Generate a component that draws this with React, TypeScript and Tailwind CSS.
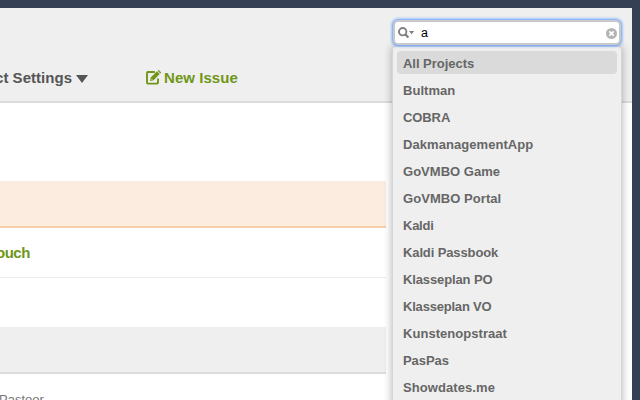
import React from "react";

const projects = [
  { name: "All Projects", tracking: "tracking-[-0.03px]" },
  { name: "Bultman", tracking: "tracking-[0.05px]" },
  { name: "COBRA", tracking: "tracking-[-0.1px]" },
  { name: "DakmanagementApp", tracking: "tracking-[0.06px]" },
  { name: "GoVMBO Game", tracking: "tracking-[0.02px]" },
  { name: "GoVMBO Portal", tracking: "tracking-[0.06px]" },
  { name: "Kaldi", tracking: "tracking-[-0.25px]" },
  { name: "Kaldi Passbook", tracking: "tracking-[-0.12px]" },
  { name: "Klasseplan PO", tracking: "tracking-[-0.12px]" },
  { name: "Klasseplan VO", tracking: "tracking-[-0.2px]" },
  { name: "Kunstenopstraat", tracking: "tracking-[0.04px]" },
  { name: "PasPas", tracking: "tracking-[-0.05px]" },
  { name: "Showdates.me", tracking: "tracking-[0.08px]" },
];

function EditIcon() {
  return (
    <svg width="15" height="15" viewBox="0 0 15 15" fill="none" className="-mt-px shrink-0">
      <path d="M8.8 2H2C1.400 2 1 2.400 1 3V12.600C1 13.200 1.400 13.600 2 13.600H11C11.600 13.600 12 13.200 12 12.600V8.600" stroke="#6f9618" strokeWidth="1.900" />
      <path d="M4 11.100L4.800 7.400L10.900 1.300L13.700 4.100L7.600 10.200Z" fill="#6f9618" />
      <path d="M11.700 .7L12.400 0H12.700L15 2.300V2.700L14.300 3.400Z" fill="#6f9618" />
      <path d="M5.200 8.700L6.400 9.900" stroke="#efefef" strokeWidth=".8" />
    </svg>
  );
}

function SearchField() {
  return (
    <div className="flex h-[25px] items-center rounded-[5px] border-2 border-[#c9c9c9] bg-white pr-[2px] pl-[3px] shadow-[0_0_3px_1px_#5c9bff]">
      <svg width="17" height="12" viewBox="0 0 17 12" fill="none" className="mt-px shrink-0">
        <circle cx="4.700" cy="4.700" r="3.700" stroke="#808080" strokeWidth="1.900" />
        <path d="M7.300 7.400L10.400 10.500" stroke="#808080" strokeWidth="2.200" />
        <path d="M11 4H16.200L13.600 7.200Z" fill="#808080" />
      </svg>
      <span className="ml-[6px] text-[12.5px] leading-4 text-black">a</span>
      <svg width="11" height="11" viewBox="0 0 11 11" className="mt-px ml-auto shrink-0">
        <circle cx="5.500" cy="5.500" r="5.500" fill="#b4b4b4" />
        <path d="M3.300 3.300L7.700 7.700M7.700 3.300L3.300 7.700" stroke="#fff" strokeWidth="1.700" />
      </svg>
    </div>
  );
}

export default function App() {
  return (
    <div className="relative h-[400px] w-[640px] overflow-hidden bg-[#364055] pt-2 pr-2 font-['Liberation_Sans',Arial,sans-serif]">
      <div className="h-[392px] bg-white">
        <header className="flex h-[95px] border-b-2 border-[#dcdcdc] bg-[#efefef] pt-[60px] text-[15px] leading-5 font-bold">
          <div className="flex h-5 w-[146px] items-center text-[#555]">
            <span className="-ml-[5px] w-[78px] whitespace-nowrap tracking-[0.04px]">ct Settings</span>
            <svg width="12" height="8" viewBox="0 0 12 8" className="mt-[2px] ml-[3px]">
              <path d="M0 0H12L6 8Z" fill="#555" />
            </svg>
          </div>
          <div className="flex h-5 items-center text-[#6f9618]">
            <EditIcon />
            <span className="ml-[3px] tracking-[0.05px]">New Issue</span>
          </div>
        </header>
        <main className="w-[386px] pt-[78px]">
          <div className="h-[47px] border-b-2 border-[#f7ceaa] bg-[#fcebdf]" />
          <div className="h-[50px] overflow-hidden border-b border-[#ececec] pt-[15px] text-[15px] leading-5 font-bold text-[#6f9618]">
            <span className="-ml-[4px] tracking-[-0.5px]">ouch</span>
          </div>
          <div className="mt-[49px] h-[47px] border-b-2 border-[#dcdcdc] bg-[#efefef]" />
          <div className="-ml-px pt-[16px] text-[13px] leading-5 text-[#777]">Pastoor</div>
        </main>
      </div>
      <div className="absolute top-[20px] left-[392px] w-[230px]">
        <div className="relative z-10 px-px">
          <SearchField />
        </div>
        <ul className="mt-px h-[370px] rounded-t-[4px] border-x border-t border-[#d5d5d5] bg-[#efefef] px-1 pt-1 text-[13px] font-bold text-[#666] shadow-[0_0_9px_rgba(0,0,0,0.3)]">
          {projects.map(({ name, tracking }, i) => (
            <li
              key={name}
              className={`mb-1 h-[23px] rounded-[4px] px-1.5 leading-[26px] ${tracking} ${i === 0 ? "bg-[#dadada]" : ""}`}
            >
              {name}
            </li>
          ))}
        </ul>
      </div>
    </div>
  );
}
